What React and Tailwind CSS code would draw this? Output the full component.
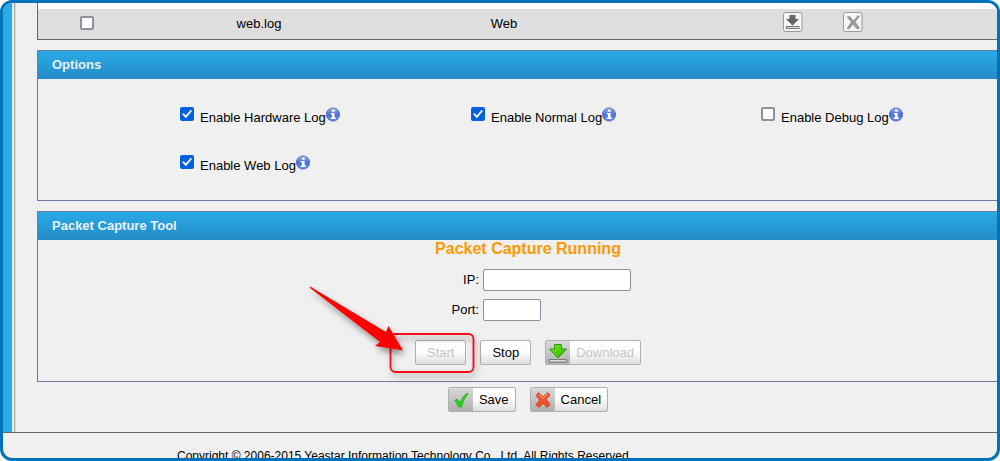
import { useState } from 'react';

const InfoIcon = () => (
  <svg viewBox="0 0 14 15" className="w-[14px] h-[15px] shrink-0" aria-hidden="true">
    <defs>
      <linearGradient id="info" x1="0" y1="0" x2="0" y2="1">
        <stop offset="0" stopColor="#9db4f2" />
        <stop offset="0.5" stopColor="#4a70dc" />
        <stop offset="1" stopColor="#6f95f0" />
      </linearGradient>
    </defs>
    <circle cx="7" cy="7.5" r="6.6" fill="url(#info)" stroke="#4360b5" strokeWidth="0.8" />
    <rect x="6" y="2.5" width="2.6" height="2.300" fill="#fff" />
    <path d="M4.800 6h3.800v4.600h1.200v1.500H4.800v-1.500H6V7.400H4.800z" fill="#fff" />
  </svg>
);

const DownloadIcon = () => (
  <svg viewBox="0 0 24 23" className="w-6 h-[23px]" aria-hidden="true">
    <defs>
      <linearGradient id="down" x1="0" y1="0" x2="1" y2="1">
        <stop offset="0" stopColor="#7ae818" />
        <stop offset="1" stopColor="#25b800" />
      </linearGradient>
    </defs>
    <path d="M8.500 3.500h7v4.500H20.500L12 17 3.500 8h5z" fill="url(#down)" stroke="#2a9a10" />
    <path d="M3.500 18.500h17l.5 2.500H3z" fill="#ddd" stroke="#777" />
  </svg>
);

const SaveIcon = () => (
  <svg viewBox="0 0 24 23" className="w-6 h-[23px]" aria-hidden="true">
    <path d="M5.500 12.500l2.500-1.500 3 3.500c2-4.500 4-7.500 7.500-9.500l.5 1c-3 3.500-5 7.500-6.500 13h-3c-1-2.500-2-4.500-4-6.500z" fill="#2fd01c" stroke="#25a81a" strokeWidth="0.7" />
  </svg>
);

const CancelIcon = () => (
  <svg viewBox="0 0 24 23" className="w-6 h-[23px]" aria-hidden="true">
    <path d="M7.500 4.500l4.500 4.500 4.500-4.500 2.500 2.500-4 4.500 4 5-3 3-4-4.500-4 4.500-3-3 4-4.500-4-4.500z" fill="#f4522b" stroke="#c83a20" strokeWidth="0.900" />
    <path d="M7.500 6l4.500 4.500L16.500 6" fill="none" stroke="#fb9a6c" strokeWidth="1.200" />
  </svg>
);

const Checkbox = ({ id, checked, onChange, label }) => (
  <span className="relative inline-flex w-[14px] h-[14px] shrink-0">
    <input
      id={id}
      type="checkbox"
      aria-label={label}
      checked={checked}
      onChange={onChange}
      className="appearance-none w-[14px] h-[14px] rounded-xs border-2 border-[#8f8f9d] bg-white checked:border-[#0060df] checked:bg-[#0060df]"
    />
    {checked && (
      <svg viewBox="0 0 14 14" className="absolute inset-0 pointer-events-none" aria-hidden="true">
        <path d="M3.300 7.200l2.500 2.600 5-5.800" fill="none" stroke="#fff" strokeWidth="1.900" strokeLinecap="round" />
      </svg>
    )}
  </span>
);

const Panel = ({ title, children }) => (
  <section className="mt-[10px] border border-[#6b7ba8]">
    <h2 className="h-7 leading-7 pl-[14px] font-bold text-[#e8f3fa] bg-linear-to-b from-[#29abe6] to-[#248bc8]">{title}</h2>
    {children}
  </section>
);

const Button = ({ icon, disabled, children }) => (
  <button
    type="button"
    disabled={disabled}
    className="flex items-center h-[25px] border border-[#b0b0b0] rounded-xs bg-linear-to-b from-white from-45% to-[#dedede] text-black disabled:text-[#c4c4c4]"
  >
    {icon && <span className="h-full bg-linear-to-b from-[#dadada] to-[#b0b0b0]">{icon}</span>}
    <span className={icon ? 'px-[6px]' : 'px-[11px]'}>{children}</span>
  </button>
);

const Arrow = () => (
  <svg viewBox="0 0 190 115" className="absolute -left-[116px] -top-[65px] w-[190px] h-[115px] max-w-none pointer-events-none" aria-hidden="true">
    <defs>
      <filter id="shadow" x="-20%" y="-20%" width="140%" height="150%">
        <feDropShadow dx="2" dy="4" stdDeviation="3" floodColor="#000" floodOpacity="0.4" />
      </filter>
    </defs>
    <rect x="91.500" y="59" width="83" height="38" rx="5" fill="none" stroke="#f01018" strokeWidth="1.800" filter="url(#shadow)" />
    <path d="M11 11.500L87 57l2.500-6L104 75.500l-28-4.500 5-4-70-54z" fill="#ff0000" filter="url(#shadow)" />
  </svg>
);

const LOGS = [
  { id: 'hardware', label: 'Enable Hardware Log', on: true },
  { id: 'normal', label: 'Enable Normal Log', on: true },
  { id: 'debug', label: 'Enable Debug Log', on: false },
  { id: 'web', label: 'Enable Web Log', on: true },
];

const FileTable = () => {
  const [selected, setSelected] = useState(false);
  return (
    <div className="border-x border-b border-[#666] bg-white pt-[6px]">
      <table className="w-full table-fixed bg-[#dedede]">
        <colgroup>
          <col className="w-[98px]" />
          <col className="w-[246px]" />
          <col className="w-[244px]" />
          <col className="w-[137px]" />
          <col className="w-[60px]" />
          <col className="w-[60px]" />
          <col />
        </colgroup>
        <tbody>
          <tr className="h-[30px] text-center">
            <td><div className="flex justify-center pb-0.5"><Checkbox label="Select web.log" checked={selected} onChange={() => setSelected(!selected)} /></div></td>
            <td>web.log</td>
            <td>Web</td>
            <td />
            <td>
              <button type="button" aria-label="Download web.log" className="block mx-auto -mt-1">
                <svg viewBox="0 0 20 20" className="w-5 h-5">
                  <rect x="0.500" y="0.500" width="18.500" height="19" rx="2" fill="#f6f6f6" stroke="#999" />
                  <path d="M6.500 3h6v4H16l-6.500 6.500L3 7h3.500z" fill="#666" />
                  <rect x="3.500" y="14.500" width="12.500" height="2" fill="#ddd" stroke="#777" />
                </svg>
              </button>
            </td>
            <td>
              <button type="button" aria-label="Delete web.log" className="block mx-auto -mt-1">
                <svg viewBox="0 0 20 20" className="w-5 h-5">
                  <rect x="0.500" y="0.500" width="18.500" height="19" rx="2" fill="#f6f6f6" stroke="#999" />
                  <path d="M3.500 5l3.500-1 3.500 4.500L14.500 3.500l2.500.5-4.500 6L17 16l-3 1.500-4-5-4 5-2.500-1L8 10z" fill="#999" />
                </svg>
              </button>
            </td>
            <td />
          </tr>
        </tbody>
      </table>
    </div>
  );
};

const App = () => {
  const [logs, setLogs] = useState(LOGS);
  const toggle = (id) => setLogs(prev => prev.map(l => (l.id === id ? { ...l, on: !l.on } : l)));

  return (
    <div className="h-screen bg-white">
      <div className="h-full flex flex-col overflow-hidden rounded-xl border-3 border-[#0072bc] bg-[#f0f0f0] text-black text-[13px] leading-4 font-['Liberation_Sans',Arial,sans-serif]">
        <div className="flex shrink-0 border-b border-[#666]">
          <div className="w-[9px] shrink-0 bg-[#29abe6]" />
          <div className="w-1 shrink-0 border-l-2 border-r border-l-[#e4f2f8] border-r-[#dcdcdc] bg-[#aaa]" />
          <main className="flex-1 min-w-0 pl-[21px] -mr-[22px] pb-5">
            <FileTable />

            <Panel title="Options">
              <div className="grid grid-cols-[291fr_290fr_257fr] gap-y-8 pl-[142px] pt-7 pb-[29px]">
                {logs.map(log => (
                  <div key={log.id} className="flex items-start h-4">
                    <Checkbox id={log.id} checked={log.on} onChange={() => toggle(log.id)} />
                    <label htmlFor={log.id} className="pl-[6px] pt-[3px]">{log.label}</label>
                    <InfoIcon />
                  </div>
                ))}
              </div>
            </Panel>

            <Panel title="Packet Capture Tool">
              <div className="pb-4">
                <p className="text-center text-base leading-[18px] font-bold text-[#ff9900]">Packet Capture Running</p>
                <div className="grid grid-cols-[45%_1fr] gap-x-1 gap-y-2 items-center mt-[11px]">
                  <label htmlFor="ip" className="text-right">IP:</label>
                  <input id="ip" type="text" className="w-[148px] h-[22px] px-1 bg-white border border-[#8f8f9d] rounded-xs" />
                  <label htmlFor="port" className="text-right">Port:</label>
                  <input id="port" type="text" className="w-[58px] h-[22px] px-1 bg-white border border-[#8f8f9d] rounded-xs" />
                </div>
                <div className="flex justify-center gap-[14px] mt-[19px]">
                  <div className="relative">
                    <Button disabled>Start</Button>
                    <Arrow />
                  </div>
                  <Button>Stop</Button>
                  <Button disabled icon={<DownloadIcon />}>Download</Button>
                </div>
              </div>
            </Panel>

            <div className="flex justify-center gap-[14px] mt-[5px]">
              <Button icon={<SaveIcon />}>Save</Button>
              <Button icon={<CancelIcon />}>Cancel</Button>
            </div>
          </main>
        </div>
        <footer className="shrink-0 pl-[174px] pt-[15px] text-xs">Copyright © 2006-2015 Yeastar Information Technology Co., Ltd. All Rights Reserved.</footer>
      </div>
    </div>
  );
};

export default App;
